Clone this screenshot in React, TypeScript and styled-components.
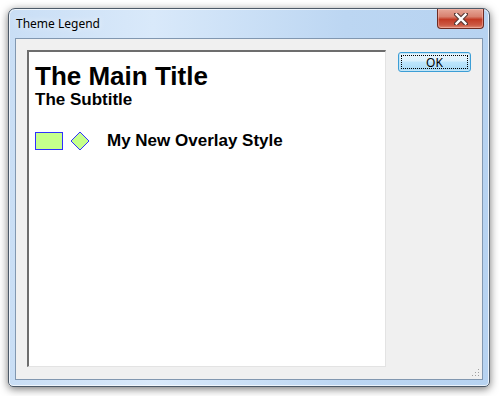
import React from 'react';
import styled, { createGlobalStyle } from 'styled-components';

const GlobalStyle = createGlobalStyle`
	html, body {
		margin: 0;
		padding: 0;
		background: #ffffff;
	}
`;

const Desktop = styled.div`
	width: 499px;
	height: 396px;
	padding: 8px 0 0 8px;
	box-sizing: border-box;
`;

const Window = styled.div`
	width: 482px;
	height: 379px;
	box-sizing: border-box;
	border: 1px solid #4d5a68;
	border-radius: 7px 7px 5px 5px;
	background: linear-gradient(90deg, #c9def5 0%, #d9e9fa 30%, #bcd6f2 70%, #b7d3f1 100%);
	box-shadow: 0 2px 8px rgba(0, 0, 0, 0.55), inset 0 0 0 1px rgba(255, 255, 255, 0.7);
	display: flex;
	flex-direction: column;
	padding: 0 6px 6px 6px;
`;

const TitleBar = styled.div`
	height: 29px;
	display: flex;
	justify-content: space-between;
	align-items: flex-start;
	flex-shrink: 0;
`;

const Caption = styled.span`
	font-family: 'Noto Sans', 'Liberation Sans', sans-serif;
	font-size: 12px;
	color: #000000;
	margin: 6px 0 0 1px;
	text-shadow: 0 0 6px rgba(255, 255, 255, 0.9);
`;

const CloseButton = styled.div`
	width: 47px;
	height: 20px;
	margin-right: -1px;
	box-sizing: border-box;
	border: 1px solid #6d2b22;
	border-top: none;
	border-radius: 0 0 4px 4px;
	background: linear-gradient(180deg, #e6a798 0%, #d8816f 40%, #c23b25 55%, #cc5a45 85%, #df8f78 100%);
	display: flex;
	align-items: center;
	justify-content: center;
	box-shadow: inset 0 0 0 1px rgba(255, 200, 190, 0.45);
`;

const Client = styled.div`
	flex: 1;
	border: 1px solid #8197b0;
	background: #f0f0f0;
	display: flex;
	padding: 11px 10px 11px 11px;
	gap: 12px;
`;

const Panel = styled.div`
	width: 359px;
	height: 317px;
	flex-shrink: 0;
	box-sizing: border-box;
	background: #ffffff;
	border-top: 2px solid #6d6d6d;
	border-left: 2px solid #6d6d6d;
	border-right: 1px solid #e3e3e3;
	border-bottom: 1px solid #e3e3e3;
	padding: 9px 6px;
	font-family: 'Liberation Sans', Arial, sans-serif;
	color: #000000;
`;

const MainTitle = styled.div`
	font-size: 26px;
	font-weight: bold;
	line-height: 30px;
`;

const Subtitle = styled.div`
	font-size: 17px;
	font-weight: bold;
	line-height: 18px;
`;

const LegendRow = styled.div`
	display: flex;
	align-items: center;
	margin-top: 22px;
`;

const Swatch = styled.div<{ $fill: string; $stroke: string }>`
	width: 28px;
	height: 18px;
	box-sizing: border-box;
	background: ${(p) => p.$fill};
	border: 1px solid ${(p) => p.$stroke};
`;

const Marker = styled.svg`
	margin-left: 7px;
	flex-shrink: 0;
`;

const LegendLabel = styled.span`
	font-size: 17px;
	font-weight: bold;
	margin-left: 17px;
`;

const Side = styled.div`
	flex: 1;
	display: flex;
	flex-direction: column;
	padding-top: 2px;
`;

const OkButton = styled.button`
	width: 73px;
	height: 20px;
	box-sizing: border-box;
	border: 1px solid #3c9ed6;
	border-radius: 3px;
	background: linear-gradient(180deg, #eaf6fd 0%, #d9f0fc 45%, #bee6fd 50%, #a7d9f5 100%);
	font-family: 'Noto Sans', 'Liberation Sans', sans-serif;
	font-size: 12px;
	color: #000000;
	padding: 0;
	position: relative;
	box-shadow: inset 0 0 0 1px #c4e5f6;

	&::after {
		content: '';
		position: absolute;
		inset: 2px;
		border: 1px dotted #000000;
	}
`;

const Grip = styled.svg`
	align-self: flex-end;
	margin-top: auto;
	margin-right: -8px;
	margin-bottom: -9px;
`;

const App = () => {
	return (
		<>
			<GlobalStyle />
			<Desktop>
				<Window>
					<TitleBar>
						<Caption>Theme Legend</Caption>
						<CloseButton>
							<svg width="14" height="12" viewBox="0 0 14 12">
								<path d="M2 1 L12 11 M12 1 L2 11" stroke="#5a3a36" strokeWidth="4.5" strokeLinecap="square" />
								<path d="M2.5 1.5 L11.5 10.5 M11.5 1.5 L2.5 10.5" stroke="#ffffff" strokeWidth="2.4" strokeLinecap="square" />
							</svg>
						</CloseButton>
					</TitleBar>
					<Client>
						<Panel>
							<MainTitle>The Main Title</MainTitle>
							<Subtitle>The Subtitle</Subtitle>
							<LegendRow>
								<Swatch $fill="#c6ff8c" $stroke="#3030ff" />
								<Marker width="20" height="20" viewBox="0 0 20 20">
									<path d="M10 1 L19 10 L10 19 L1 10 Z" fill="#c6ff8c" stroke="#3030ff" strokeWidth="1" />
								</Marker>
								<LegendLabel>My New Overlay Style</LegendLabel>
							</LegendRow>
						</Panel>
						<Side>
							<OkButton>OK</OkButton>
							<Grip width="8" height="8" viewBox="0 0 8 8">
								<rect x="6" y="0" width="1" height="1" fill="#a0a0a0" />
								<rect x="3" y="3" width="1" height="1" fill="#a0a0a0" />
								<rect x="6" y="3" width="1" height="1" fill="#a0a0a0" />
								<rect x="0" y="6" width="1" height="1" fill="#a0a0a0" />
								<rect x="3" y="6" width="1" height="1" fill="#a0a0a0" />
								<rect x="6" y="6" width="1" height="1" fill="#a0a0a0" />
							</Grip>
						</Side>
					</Client>
				</Window>
			</Desktop>
		</>
	);
};

export default App;
